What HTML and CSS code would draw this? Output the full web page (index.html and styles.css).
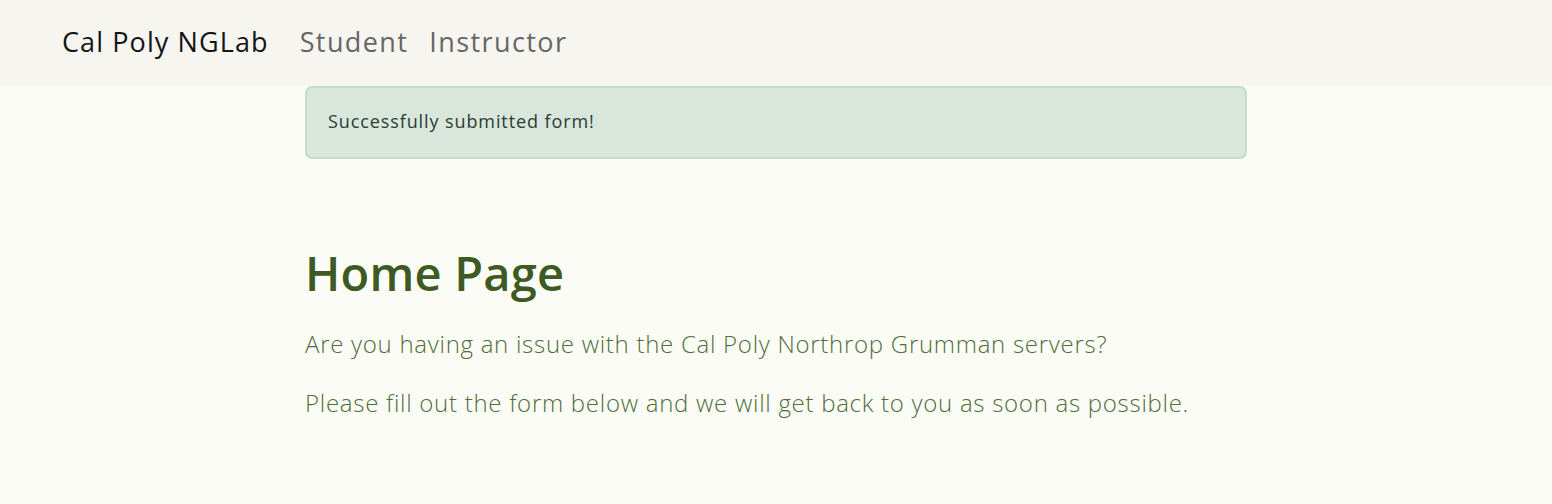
FILE: index.html
```html
<!DOCTYPE html>
<html lang="en">
<head>
<meta charset="utf-8">
<title>Cal Poly NGLab</title>
<link rel="stylesheet" href="styles.css">
</head>
<body>
<nav class="navbar">
  <a class="brand" href="#">Cal Poly NGLab</a>
  <a class="nav-link" href="#">Student</a>
  <a class="nav-link" href="#">Instructor</a>
</nav>
<main class="container">
  <div class="alert">Successfully submitted form!</div>
  <h1 class="title">Home Page</h1>
  <p class="lead">Are you having an issue with the Cal Poly Northrop Grumman servers?</p>
  <p class="lead">Please fill out the form below and we will get back to you as soon as possible.</p>
</main>
</body>
</html>
```

FILE: styles.css
```css
* { box-sizing: border-box; }
html, body { margin: 0; padding: 0; }
body {
  background: #fcfcf7;
  font-family: "Open Sans", "Noto Sans", sans-serif;
  width: 1552px;
  height: 504px;
  overflow: hidden;
}
.navbar {
  height: 86px;
  background: #f6f5f0;
  display: flex;
  align-items: center;
  padding: 0 0 4px 62px;
}
.navbar a { text-decoration: none; }
.brand {
  font-size: 27px;
  letter-spacing: 1.1px;
  color: #141414;
  margin-right: 31px;
}
.nav-link {
  font-size: 27px;
  letter-spacing: 1.4px;
  color: #666666;
  margin-right: 21px;
}
.container {
  width: 942px;
  margin: 0 auto;
}
.alert {
  height: 73px;
  display: flex;
  align-items: center;
  padding: 0 21px 3px;
  background: #d8e6dc;
  border: 2px solid #c4dccc;
  border-radius: 7px;
  color: #2b3d30;
  font-size: 18px;
  letter-spacing: 0.9px;
}
.title {
  margin: 86px 0 0;
  font-size: 47px;
  font-weight: 600;
  color: #3e5a23;
  line-height: 56px;
  letter-spacing: 0.2px;
}
.lead {
  margin: 0;
  font-size: 24px;
  font-weight: 300;
  color: #4f6f39;
  line-height: 59px;
  letter-spacing: 0.72px;
}
.title + .lead { margin-top: 13px; }
```
